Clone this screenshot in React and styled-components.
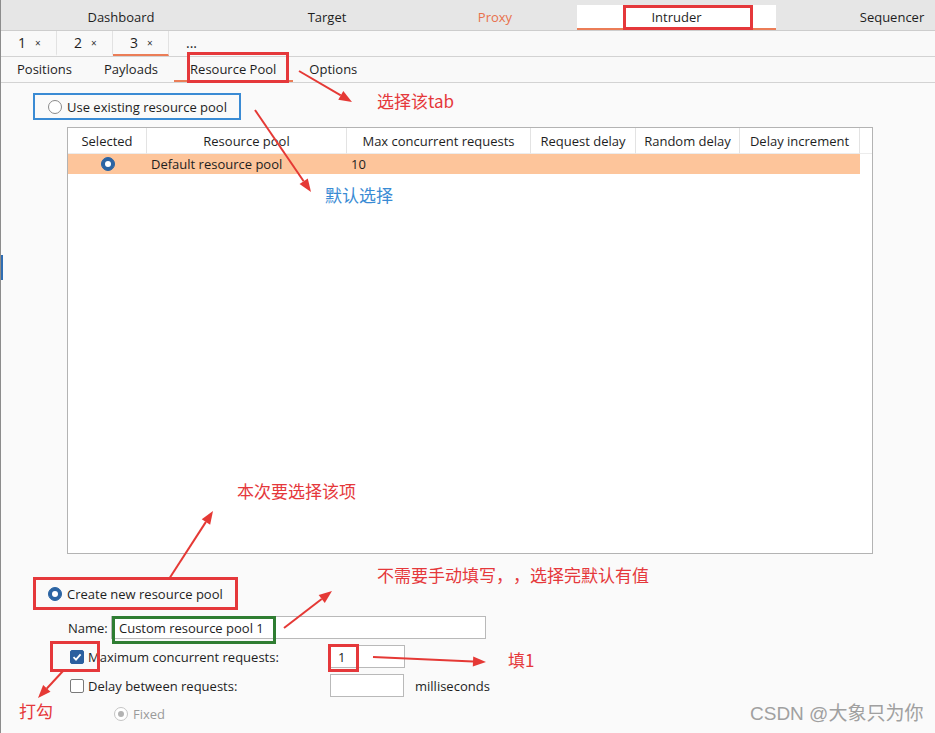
import React from 'react';
import styled, { createGlobalStyle } from 'styled-components';

const Global = createGlobalStyle`
  html, body { margin: 0; padding: 0; background: #fafafa; }
  body { font-family: "Open Sans", "Liberation Sans", sans-serif; font-size: 13px; color: #1e1e1e; }
`;

const Page = styled.div`
  position: relative;
  width: 935px;
  height: 733px;
  overflow: hidden;
  background: #fafafa;
  box-sizing: border-box;
  border-left: 1px solid #8c8c8c;
`;

const TopBar = styled.div`
  display: flex;
  height: 30px;
  background: #e6e6e6;
  border-bottom: 1px solid #cdcdcd;
  white-space: nowrap;
`;

const TopTab = styled.div`
  flex: 0 0 ${p => p.$w}px;
  display: flex;
  align-items: center;
  justify-content: center;
  box-sizing: border-box;
  padding-top: 4px;
  color: ${p => (p.$hot ? '#e8714c' : '#1e1e1e')};
  ${p => p.$active && `
    margin-top: 5px;
    padding-top: 0;
    background: #ffffff;
    border-bottom: 2px solid #eb7d57;
  `}
`;

const SubBar = styled.div`
  display: flex;
  height: 25px;
  background: #f9f9f9;
  border-bottom: 1px solid #d3d3d3;
`;

const NumTab = styled.div`
  width: 56px;
  display: flex;
  align-items: center;
  box-sizing: border-box;
  padding-left: 17px;
  gap: 9px;
  border-right: ${p => (p.$plain ? 'none' : '1px solid #e2e2e2')};
  border-bottom: 2px solid ${p => (p.$active ? '#eb7d57' : 'transparent')};
  font-size: 14px;
`;

const Close = styled.span`
  font-size: 10px;
  color: #333;
`;

const InnerBar = styled.div`
  display: flex;
  height: 25px;
  background: #f9f9f9;
  border-bottom: 1px solid #d3d3d3;
`;

const InnerTab = styled.div`
  display: flex;
  align-items: center;
  padding: 0 ${p => p.$pad || 16}px 0 ${p => p.$padl || 16}px;
  box-sizing: border-box;
  border-bottom: 2px solid ${p => (p.$active ? '#eb7d57' : 'transparent')};
`;

const Content = styled.div`
  display: flex;
  flex-direction: column;
  align-items: flex-start;
  padding: 10px 0 0 32px;
`;

const Option = styled.label`
  display: inline-flex;
  align-items: center;
  gap: 5px;
  box-sizing: border-box;
  height: ${p => p.$h}px;
  padding: 0 12px 0 ${p => 15 - p.$bw}px;
  border: ${p => p.$bw}px solid ${p => p.$frame};
  margin-top: ${p => p.$mt || 0}px;
`;

const Radio = styled.span`
  width: 14px;
  height: 14px;
  border-radius: 50%;
  box-sizing: border-box;
  display: inline-flex;
  align-items: center;
  justify-content: center;
  flex: none;
  background: ${p => (p.$on ? '#2b64a3' : '#ffffff')};
  border: 1px solid ${p => (p.$on ? '#2b64a3' : p.$off ? '#c4c4c4' : '#8a8a8a')};
  &::after {
    content: '';
    width: 6px;
    height: 6px;
    border-radius: 50%;
    background: ${p => (p.$on ? '#ffffff' : p.$off ? '#b3b3b3' : 'transparent')};
  }
`;

const Table = styled.div`
  margin: 7px 0 0 34px;
  width: 806px;
  height: 427px;
  box-sizing: border-box;
  border: 1px solid #b3b3b3;
  background: #ffffff;
`;

const Grid = styled.div`
  display: grid;
  grid-template-columns: 79px 200px 184px 105px 104px 120px 1fr;
`;

const Head = styled.div`
  height: 25px;
  display: flex;
  align-items: center;
  justify-content: center;
  border-right: ${p => (p.$last ? 'none' : '1px solid #e3e3e3')};
  border-bottom: 1px solid #ececec;
  white-space: nowrap;
`;

const Cell = styled.div`
  height: 20px;
  display: flex;
  align-items: center;
  justify-content: ${p => (p.$center ? 'center' : 'flex-start')};
  padding-left: ${p => (p.$center ? 0 : 4)}px;
  background: ${p => (p.$blank ? 'transparent' : '#fdc59b')};
  white-space: nowrap;
`;

const Row = styled.div`
  display: flex;
  align-items: center;
  margin-top: ${p => p.$mt}px;
  margin-left: ${p => p.$ml}px;
  height: ${p => p.$h || 23}px;
`;

const Label = styled.span`
  width: ${p => p.$w}px;
  flex: none;
  margin-left: ${p => p.$gap || 0}px;
  color: ${p => (p.$off ? '#9a9a9a' : '#1e1e1e')};
`;

const Field = styled.div`
  width: ${p => p.$w}px;
  height: 23px;
  box-sizing: border-box;
  border: 1px solid #b9b9b9;
  background: #ffffff;
  display: flex;
  align-items: center;
  padding-left: 7px;
  flex: none;
`;

const Check = styled.span`
  width: 14px;
  height: 14px;
  box-sizing: border-box;
  border-radius: 2px;
  flex: none;
  margin-right: 4px;
  display: inline-flex;
  align-items: center;
  justify-content: center;
  background: ${p => (p.$on ? '#2b5f9f' : '#ffffff')};
  border: 1px solid ${p => (p.$on ? '#2b5f9f' : '#7a7a7a')};
`;

const Unit = styled.span`
  margin-left: 11px;
`;

const Overlay = styled.svg`
  position: absolute;
  left: 0;
  top: 0;
  pointer-events: none;
`;

const Frame = styled.div`
  position: absolute;
  left: ${p => p.$x}px;
  top: ${p => p.$y}px;
  width: ${p => p.$w}px;
  height: ${p => p.$h}px;
  box-sizing: border-box;
  border: 3px solid ${p => p.$c || '#e5383b'};
  pointer-events: none;
`;

const Note = styled.div`
  position: absolute;
  left: ${p => p.$x}px;
  top: ${p => p.$y}px;
  font-family: "Noto Sans CJK SC", "Noto Sans", sans-serif;
  font-size: 17px;
  line-height: 20px;
  text-spacing-trim: space-all;
  color: ${p => (p.$blue ? '#3a8bd4' : '#e5383b')};
  white-space: nowrap;
`;

const Watermark = styled.div`
  position: absolute;
  left: 749px;
  top: 703px;
  font-family: "Liberation Sans", "Noto Sans CJK SC", sans-serif;
  font-size: 19px;
  line-height: 22px;
  color: #a0a0a0;
`;

const EdgeMark = styled.div`
  position: absolute;
  left: -1px;
  top: 255px;
  width: 3px;
  height: 25px;
  background: #2f6db3;
`;

const Arrow = ({ x1, y1, x2, y2 }) => {
  const a = Math.atan2(y2 - y1, x2 - x1);
  const L = 13;
  const W = 5;
  const bx = x2 - L * Math.cos(a);
  const by = y2 - L * Math.sin(a);
  const nx = -Math.sin(a) * W;
  const ny = Math.cos(a) * W;
  return (
    <g>
      <line x1={x1} y1={y1} x2={bx} y2={by} stroke="#e53935" strokeWidth="2" />
      <polygon points={`${x2},${y2} ${bx + nx},${by + ny} ${bx - nx},${by - ny}`} fill="#e53935" />
    </g>
  );
};

const CheckMark = () => (
  <svg width="10" height="10" viewBox="0 0 10 10">
    <path d="M1.5 5.2 L4 7.6 L8.6 2.4" fill="none" stroke="#fff" strokeWidth="1.8" />
  </svg>
);

const topTabs = [
  { label: 'Dashboard', w: 240 },
  { label: 'Target', w: 172 },
  { label: 'Proxy', w: 164, hot: true },
  { label: 'Intruder', w: 199, active: true },
  { label: 'Sequencer', w: 232 },
];

const heads = ['Selected', 'Resource pool', 'Max concurrent requests', 'Request delay', 'Random delay', 'Delay increment', ''];

const arrows = [
  [298, 71, 351, 102],
  [254, 110, 310, 192],
  [168, 579, 212, 511],
  [283, 628, 331, 591],
  [372, 657, 485, 662],
  [62, 671, 37, 698],
];

export default function App() {
  return (
    <Page>
      <Global />
      <TopBar>
        {topTabs.map(t => (
          <TopTab key={t.label} $w={t.w} $hot={t.hot} $active={t.active}>{t.label}</TopTab>
        ))}
      </TopBar>
      <SubBar>
        <NumTab>1<Close>×</Close></NumTab>
        <NumTab>2<Close>×</Close></NumTab>
        <NumTab $active>3<Close>×</Close></NumTab>
        <NumTab $plain>...</NumTab>
      </SubBar>
      <InnerBar>
        <InnerTab $padl={16}>Positions</InnerTab>
        <InnerTab>Payloads</InnerTab>
        <InnerTab $active $padl={16} $pad={17}>Resource Pool</InnerTab>
        <InnerTab>Options</InnerTab>
      </InnerBar>
      <Content>
        <Option $frame="#3a8bd4" $bw={2} $h={27}>
          <Radio />
          Use existing resource pool
        </Option>
        <Table>
          <Grid>
            {heads.map((h, i) => (
              <Head key={i} $last={i === heads.length - 1}>{h}</Head>
            ))}
            <Cell $center><Radio $on /></Cell>
            <Cell>Default resource pool</Cell>
            <Cell>10</Cell>
            <Cell />
            <Cell />
            <Cell />
            <Cell $blank />
          </Grid>
        </Table>
        <Option $frame="#e5383b" $bw={3} $h={33} $mt={23}>
          <Radio $on />
          Create new resource pool
        </Option>
        <Row $mt={6} $ml={35}>
          <Label $w={43}>Name:</Label>
          <Field $w={375}>Custom resource pool 1</Field>
        </Row>
        <Row $mt={6} $ml={37}>
          <Check $on><CheckMark /></Check>
          <Label $w={242}>Maximum concurrent requests:</Label>
          <Field $w={75}>1</Field>
        </Row>
        <Row $mt={6} $ml={37}>
          <Check />
          <Label $w={242}>Delay between requests:</Label>
          <Field $w={74} />
          <Unit>milliseconds</Unit>
        </Row>
        <Row $mt={6} $ml={81} $h={22}>
          <Radio $off />
          <Label $off $gap={5}>Fixed</Label>
        </Row>
      </Content>

      <EdgeMark />
      <Frame $x={622} $y={5} $w={130} $h={25} />
      <Frame $x={186} $y={52} $w={102} $h={31} />
      <Frame $x={111} $y={616} $w={164} $h={28} $c="#2f7d32" />
      <Frame $x={49} $y={641} $w={50} $h={31} />
      <Frame $x={327} $y={644} $w={31} $h={28} />

      <Overlay width="935" height="733">
        {arrows.map((a, i) => (
          <Arrow key={i} x1={a[0]} y1={a[1]} x2={a[2]} y2={a[3]} />
        ))}
      </Overlay>

      <Note $x={376} $y={91}>选择该tab</Note>
      <Note $x={324} $y={185} $blue>默认选择</Note>
      <Note $x={236} $y={481}>本次要选择该项</Note>
      <Note $x={376} $y={565}>不需要手动填写，，选择完默认有值</Note>
      <Note $x={507} $y={650}>填1</Note>
      <Note $x={18} $y={701}>打勾</Note>
      <Watermark>CSDN @大象只为你</Watermark>
    </Page>
  );
}
